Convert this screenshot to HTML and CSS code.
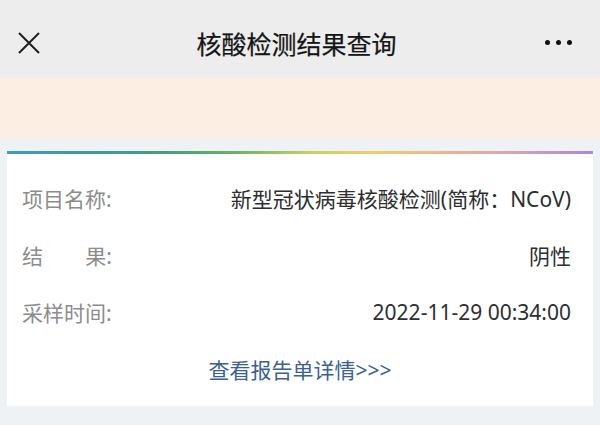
FILE: index.html
```html
<!DOCTYPE html>
<html lang="zh-CN">
<head>
<meta charset="UTF-8">
<meta name="viewport" content="width=device-width, initial-scale=1.0">
<title>核酸检测结果查询</title>

<link rel="stylesheet" href="styles.css">
</head>

<body>

<!-- Top bar -->
<div class="navbar">
<div class="nav-left">
<svg class="close-icon" width="24" height="24" viewBox="0 0 24 24">
<path d="M2 2 L22 22 M22 2 L2 22" stroke="#1f1f1f" stroke-width="2" fill="none"/>
</svg>
</div>
<div class="nav-title">核酸检测结果查询</div>
<div class="nav-right">
<span class="dot"></span><span class="dot"></span><span class="dot"></span>
</div>
</div>

<div class="banner"></div>

<!-- Result card -->
<div class="card">
<div class="card-bar"></div>

<div class="row">
<div class="label">项目名称:</div>
<div class="value">新型冠状病毒核酸检测(简称：NCoV)</div>
</div>

<div class="row">
<div class="label label-split"><span>结</span><span>果:</span></div>
<div class="value">阴性</div>
</div>

<div class="row">
<div class="label">采样时间:</div>
<div class="value">2022-11-29 00:34:00</div>
</div>

<div class="row row-link">
<a class="detail-link" href="#">查看报告单详情&gt;&gt;&gt;</a>
</div>
</div>

</body>
</html>
```

FILE: styles.css
```css
body{
    margin:0;
    background:#eef2f5;
    font-family:"Noto Sans", "Noto Sans CJK SC", sans-serif;
    height:425px;
    overflow:hidden;
}

.navbar{
    height:78px;
    background:#ededed;
    display:grid;
    grid-template-columns:1fr auto 1fr;
    align-items:center;
}

.nav-left{
    padding-left:17px;
    display:flex;
    align-items:center;
}

.close-icon{
    display:block;
    margin-top:7px;
}

.nav-title{
    font-size:25px;
    font-weight:400;
    -webkit-text-stroke:0.25px #151515;
    color:#151515;
    margin-top:8px;
    margin-right:7px;
}

.nav-right{
    display:flex;
    justify-content:flex-end;
    gap:6px;
    padding-right:28px;
    margin-top:6px;
}

.dot{
    width:5px;
    height:5px;
    border-radius:50%;
    background:#111;
}

.banner{
    height:62px;
    background:linear-gradient(180deg,#fdeee4 0%,#fdeee4 85%,#f3efec 100%);
}

.card{
    margin:11px 7px 0;
    background:#fff;
    padding:0 22px 9px 15px;
}

.card-bar{
    height:3px;
    margin:0 -22px 15px -15px;
    background:linear-gradient(90deg,#3a9ad4 0%,#3fa07c 25%,#62b266 38%,#c9cf62 52%,#f1cd6a 62%,#eeb38a 75%,#d9a3b2 86%,#a986e2 100%);
}

.row{
    height:57px;
    display:flex;
    justify-content:space-between;
    align-items:center;
    font-size:21px;
}

.label{
    color:#8c8c8c;
}

.label-split{
    width:90px;
    display:flex;
    justify-content:space-between;
}

.value{
    color:#2e2e2e;
}

.row-link{
    justify-content:center;
    padding-left:7px;
}

.detail-link{
    color:#3b6190;
    text-decoration:none;
}
```
